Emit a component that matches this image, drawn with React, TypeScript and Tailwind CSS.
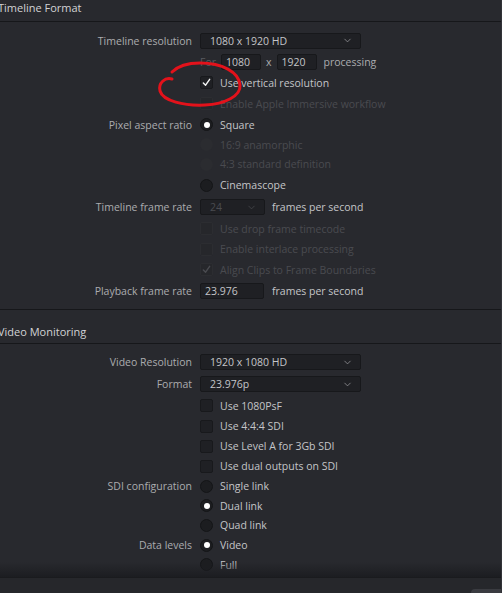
import type { ReactNode } from 'react';
import { ChevronDown } from 'lucide-react';

// Shared colours for the settings panel
const label = 'text-[#abacaf]';
const value = 'text-[#c4c5c8]';
const muted = 'text-[#4a4b50]';

const Row = ({ name, h, children }: { name?: string; h: number; children?: ReactNode }) => (
    <div className="grid grid-cols-[192px_1fr] gap-x-2 items-center" style={{ height: h }}>
        <div className={`text-right whitespace-nowrap ${label}`}>{name}</div>
        <div className="flex items-center whitespace-nowrap">{children}</div>
    </div>
);

const Select = ({ text, w, disabled }: { text: string; w: number; disabled?: boolean }) => (
    <div
        className={`h-[16px] flex items-center justify-between pl-[9px] pr-[7px] rounded-[2px] border border-[#17181b] bg-[#1f2024] ${disabled ? muted : value}`}
        style={{ width: w }}
    >
        <span>{text}</span>
        <ChevronDown size={11} strokeWidth={1.6} className={disabled ? 'text-[#4a4b50]' : 'text-[#9d9ea2]'} />
    </div>
);

const Field = ({ text, w }: { text: string; w: number }) => (
    <div className={`h-[16px] flex items-center pl-[4px] rounded-[2px] border border-[#17181b] bg-[#1f2024] ${value}`} style={{ width: w }}>
        {text}
    </div>
);

const Check = ({ text, checked, disabled }: { text: string; checked?: boolean; disabled?: boolean }) => (
    <>
        <div className={`w-[13px] h-[13px] rounded-[2px] border flex items-center justify-center ${disabled ? 'border-[#2c2d31] bg-[#26272b]' : 'border-[#18191c] bg-[#1f2024]'}`}>
            {checked && (
                <svg width="9" height="9" viewBox="0 0 10 10">
                    <path d="M1.5 5.5 L4 8 L8.5 1.5" fill="none" stroke={disabled ? '#4a4b50' : '#f2f2f2'} strokeWidth="1.6" strokeLinecap="round" strokeLinejoin="round" />
                </svg>
            )}
        </div>
        <span className={`ml-[7px] ${disabled ? muted : value}`}>{text}</span>
    </>
);

const Radio = ({ text, on, disabled }: { text: string; on?: boolean; disabled?: boolean }) => (
    <>
        <div className={`w-[13px] h-[13px] rounded-full flex items-center justify-center ${disabled ? 'bg-[#2b2c30]' : 'bg-[#1c1d20] border border-[#141517]'}`}>
            {on && <div className="w-[6px] h-[6px] rounded-full bg-white" />}
        </div>
        <span className={`ml-[7px] ${disabled ? muted : value}`}>{text}</span>
    </>
);

const Heading = ({ title, h, pt }: { title: string; h: number; pt: number }) => (
    <div className="border-b border-[#16171a] text-[#d2d3d5] text-[11px]" style={{ height: h, paddingTop: pt }}>
        <span className="-ml-[2px] leading-[14px] block">{title}</span>
    </div>
);

export default function App() {
    return (
        <div className="w-[502px] h-[593px] overflow-hidden relative bg-[#28292e] text-[10.5px] leading-[14px] font-['Open_Sans','Liberation_Sans',sans-serif] border-r border-[#323338]">
            {/* Timeline Format */}
            <Heading title="Timeline Format" h={22} pt={1} />
            <div className="pt-[8px] pb-[7px] border-b border-[#16171a]">
                <Row name="Timeline resolution" h={21}><Select text="1080 x 1920 HD" w={161} /></Row>
                <Row h={21}>
                    <span className="text-[#5a5b60] mr-[5px]">For</span>
                    <Field text="1080" w={40} />
                    <span className={`mx-[5px] ${label}`}>x</span>
                    <Field text="1920" w={40} />
                    <span className={`ml-[7px] ${label}`}>processing</span>
                </Row>
                <Row h={21}><Check text="Use vertical resolution" checked /></Row>
                <Row h={21}><Check text="Enable Apple Immersive workflow" disabled /></Row>
                <Row name="Pixel aspect ratio" h={21}><Radio text="Square" on /></Row>
                <Row h={19}><Radio text="16:9 anamorphic" disabled /></Row>
                <Row h={20}><Radio text="4:3 standard definition" disabled /></Row>
                <Row h={22}><Radio text="Cinemascope" /></Row>
                <Row name="Timeline frame rate" h={22}>
                    <Select text="24" w={65} disabled />
                    <span className={`ml-[7px] ${value}`}>frames per second</span>
                </Row>
                <Row h={21}><Check text="Use drop frame timecode" disabled /></Row>
                <Row h={20}><Check text="Enable interlace processing" disabled /></Row>
                <Row h={21}><Check text="Align Clips to Frame Boundaries" checked disabled /></Row>
                <Row name="Playback frame rate" h={22}>
                    <Field text="23.976" w={64} />
                    <span className={`ml-[8px] ${value}`}>frames per second</span>
                </Row>
            </div>

            {/* Video Monitoring */}
            <Heading title="Video Monitoring" h={34} pt={15} />
            <div className="pt-[7px]">
                <Row name="Video Resolution" h={22}><Select text="1920 x 1080 HD" w={161} /></Row>
                <Row name="Format" h={22}><Select text="23.976p" w={161} /></Row>
                <Row h={21}><Check text="Use 1080PsF" /></Row>
                <Row h={20}><Check text="Use 4:4:4 SDI" /></Row>
                <Row h={20}><Check text="Use Level A for 3Gb SDI" /></Row>
                <Row h={20}><Check text="Use dual outputs on SDI" /></Row>
                <Row name="SDI configuration" h={20}><Radio text="Single link" /></Row>
                <Row h={19}><Radio text="Dual link" on /></Row>
                <Row h={20}><Radio text="Quad link" /></Row>
                <Row name="Data levels" h={20}><Radio text="Video" on /></Row>
                <Row h={19}><Radio text="Full" /></Row>
            </div>

            {/* bottom edge of the scroll area */}
            <div className="absolute left-0 right-0 top-[562px] h-[15px] bg-gradient-to-b from-transparent to-[#1c1d21]" />
            <div className="absolute left-0 right-0 top-[577px] bottom-0 bg-[#26272b] border-t border-[#1a1b1e]" />
            <div className="absolute right-0 bottom-0 w-[30px] h-[4px] rounded-tl-[4px] bg-[#3a3b40]" />

            {/* red marker circle drawn over the vertical resolution checkbox */}
            <svg className="absolute left-0 top-0 pointer-events-none" width="502" height="593">
                <path
                    d="M172 79 C165 77 158 83 160 91 C163 101 184 106 205 105 C225 104 241 96 240 85 C239 72 222 63 200 63 C186 63 177 67 172 72"
                    fill="none"
                    stroke="#e3121b"
                    strokeWidth="3"
                    strokeLinecap="round"
                />
            </svg>
        </div>
    );
}
